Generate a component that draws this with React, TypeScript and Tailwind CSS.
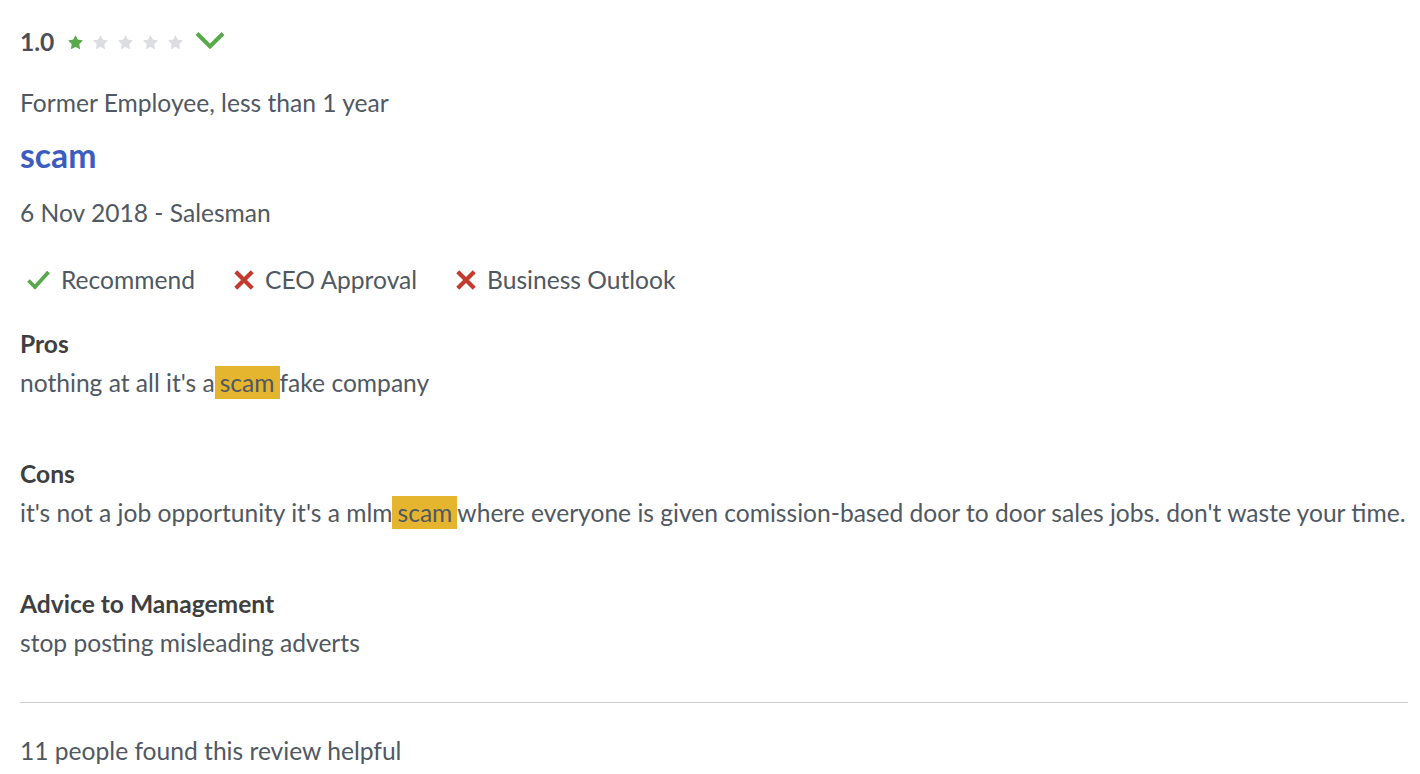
import { Star } from 'lucide-react'

function Check({ className = '' }: { className?: string }) {
  return (
    <svg viewBox="0 0 24 24" className={className} fill="none" stroke="currentColor" strokeWidth={3.8} strokeLinecap="butt">
      <path d="M2 12.5 L8.5 19 L22 4" />
    </svg>
  )
}

function Cross({ className = '' }: { className?: string }) {
  return (
    <svg viewBox="0 0 24 24" className={className} fill="none" stroke="currentColor" strokeWidth={4.6}>
      <path d="M3 3 L21 21 M21 3 L3 21" />
    </svg>
  )
}

function Mark({ children }: { children: string }) {
  return <span className="bg-[#e5b52f] px-[5px] py-[2px]">{children}</span>
}

function Flag({ ok, label }: { ok: boolean; label: string }) {
  return (
    <div className="flex items-center gap-[10px]">
      {ok ? (
        <Check className="h-[24px] w-[25px] text-[#58a94a]" />
      ) : (
        <Cross className="h-[22px] w-[22px] text-[#c23b2e]" />
      )}
      <span>{label}</span>
    </div>
  )
}

export default function App() {
  return (
    <div
      className="min-h-screen bg-white text-[24.6px] leading-[30px] text-[#505862]"
      style={{ fontFamily: 'Lato, "Open Sans", sans-serif' }}
    >
      <div className="w-[1408px] pl-5 pt-[27px]">
        <div className="flex items-center">
          <span className="font-bold text-[#4a4e57]">1.0</span>
          <div className="ml-[13px] flex items-center gap-[8px]">
            <Star className="h-[17px] w-[17px] fill-[#58a94a] text-[#58a94a]" strokeWidth={0} />
            {[0, 1, 2, 3].map((i) => (
              <Star key={i} className="h-[17px] w-[17px] fill-[#dcdde1] text-[#dcdde1]" strokeWidth={0} />
            ))}
          </div>
          <svg viewBox="0 0 30 19" className="ml-[11px] -mt-[3px] h-[19px] w-[30px] text-[#58a94a]" fill="none" stroke="currentColor" strokeWidth={4}>
            <path d="M2 2.5 L15 15.5 L28 2.5" />
          </svg>
        </div>

        <p className="mt-[31px]">Former Employee, less than 1 year</p>
        <h2 className="mt-[17px] text-[33.75px] leading-[40px] font-bold text-[#3d5cbf]">scam</h2>
        <p className="mt-[23px]">6 Nov 2018 - Salesman</p>

        <div className="mt-[37px] ml-[6px] flex items-center gap-[38px]">
          <Flag ok label="Recommend" />
          <Flag ok={false} label="CEO Approval" />
          <Flag ok={false} label="Business Outlook" />
        </div>

        <h3 className="mt-[34px] font-bold text-[#3f3f3f]">Pros</h3>
        <p className="mt-[9px]">
          nothing at all it's a<Mark>scam</Mark>fake company
        </p>

        <h3 className="mt-[61px] font-bold text-[#3f3f3f]">Cons</h3>
        <p className="mt-[9px] whitespace-nowrap">
          it's not a job opportunity it's a mlm<Mark>scam</Mark>where everyone is given comission-based door to door sales jobs. don't waste your time.
        </p>

        <h3 className="mt-[61px] font-bold text-[#3f3f3f]">Advice to Management</h3>
        <p className="mt-[9px]">stop posting misleading adverts</p>

        <div className="mt-[44px] h-px bg-[#cfcfcf]" />

        <p className="mt-[33px]">11 people found this review helpful</p>
      </div>
    </div>
  )
}
